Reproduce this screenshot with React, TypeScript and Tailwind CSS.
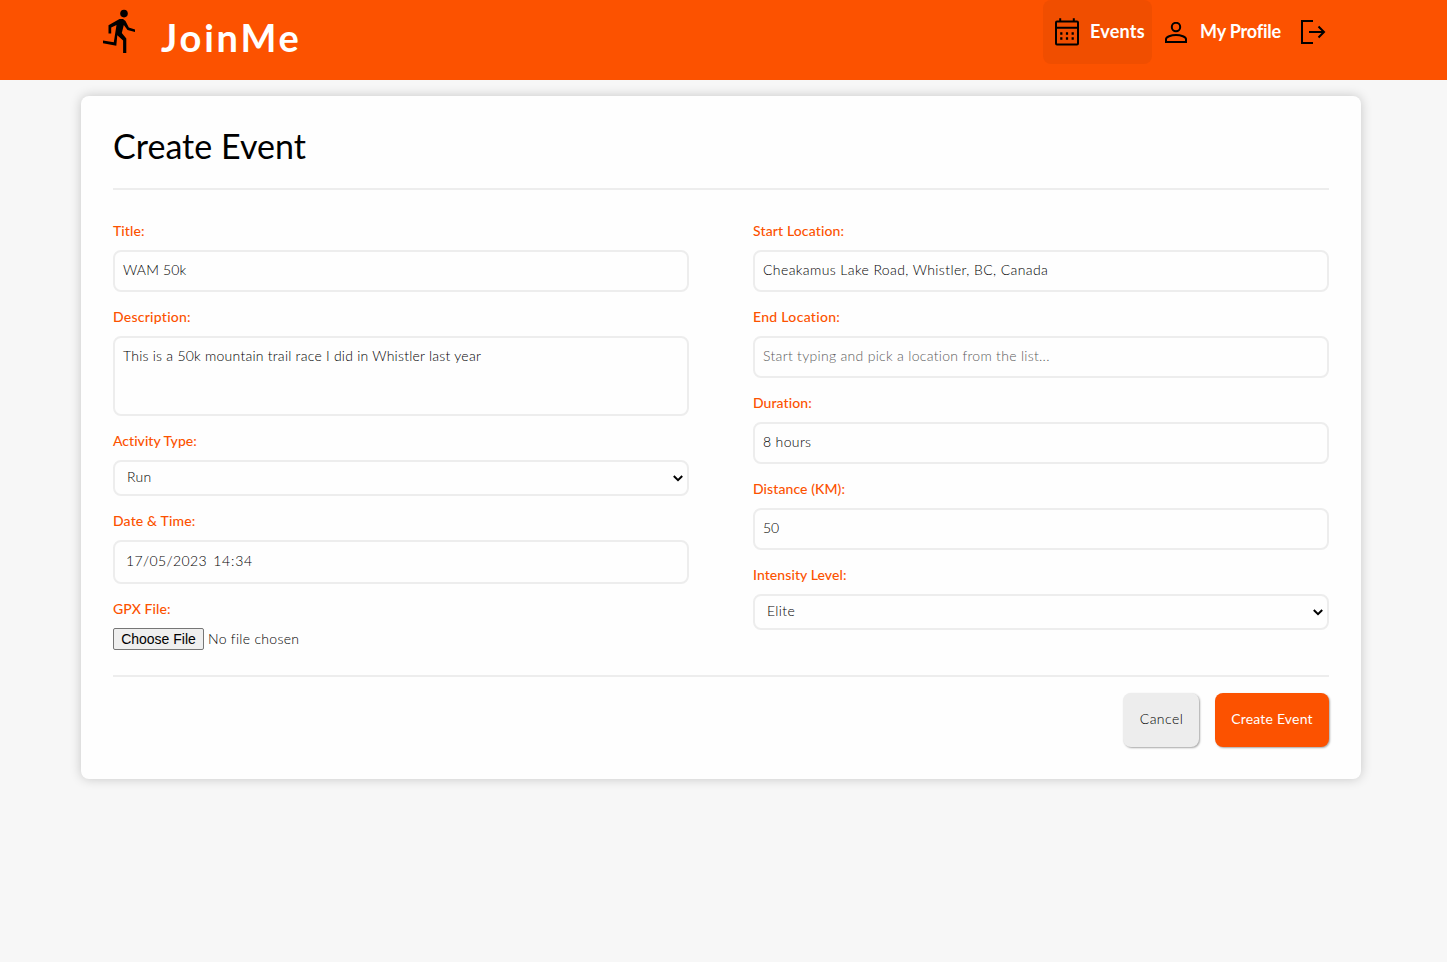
import React from "react";

type FieldProps = { label: string; labelClass?: string; children: React.ReactNode };

function Field({ label, labelClass = "tracking-[0.08px]", children }: FieldProps) {
  return (
    <div className="flex flex-col gap-[11px]">
      <div className="flex h-4 items-center">
        <span className={`text-[14px] font-medium leading-4 whitespace-nowrap text-[#fc5200] ${labelClass}`}>{label}</span>
      </div>
      {children}
    </div>
  );
}

type BoxProps = { value: string; className?: string; textClass?: string };

function Box({ value, className = "h-[42px]", textClass = "text-black" }: BoxProps) {
  return (
    <div className={`rounded-lg border-2 border-[#ededed] px-2 pt-2 text-[14px] font-light leading-5 whitespace-nowrap ${className}`}>
      <span className={textClass}>{value}</span>
    </div>
  );
}

function SelectBox({ value, textClass = "" }: { value: string; textClass?: string }) {
  return (
    <div className="flex h-9 items-center justify-between rounded-lg border-2 border-[#ededed] pl-3 pr-1 text-[14px] font-light leading-5 text-black">
      <span className={`-mt-0.5 ${textClass}`}>{value}</span>
      <svg className="mt-px h-[7px] w-[10px]" viewBox="0 0 10 7" fill="none" stroke="#000" strokeWidth="2">
        <path d="M0.800 1 5 5.200 9.200 1" />
      </svg>
    </div>
  );
}

function Header() {
  return (
    <header className="flex h-20 justify-between bg-[#fc5200] pl-[102px] pr-[121px]">
      <div className="flex">
        <svg className="mt-[9px] h-[45px] w-[34px]" viewBox="0 0 34 45">
          <circle cx="22" cy="4.6" r="3.8" />
          <path d="M17.500 10h3.500l2.500 2 3.300 6.600 6.200 1.800v2.500l-7.500-1.900-3.700-5-2 8 4.500 5.500V44h-3.200V31.500l-5.800-5.200L14.300 36.800 1 34.200v-2.800l10.800 1.900 2.700-17.300-5.300 2.600v5.900H6.500v-8.200z" />
        </svg>
        <span className="ml-[25px] mt-3 text-[38px] font-bold leading-[50px] tracking-[2.8px] text-white">JoinMe</span>
      </div>
      <nav className="flex h-16 text-[18px] font-bold leading-6 text-white">
        <a className="flex w-[109px] rounded-lg bg-[#f04e00] pl-3">
          <svg className="mt-[18px] h-7 w-6" viewBox="0 0 24 28" fill="none" stroke="#000" strokeWidth="2">
            <rect x="1" y="3.5" width="22" height="23" rx="1" />
            <path d="M1 9.800h22M5.200 0.300v3M18.800 0.300v3" />
            <path strokeWidth="2.4" d="M5.200 15.500h2.200M10.900 15.500h2.200M16.600 15.500h2.200M5.200 20.500h2.200M10.900 20.500h2.200M16.600 20.500h2.200" />
          </svg>
          <span className="ml-[11px] mt-[19px] tracking-[0.2px]">Events</span>
        </a>
        <a className="flex pl-[13px]">
          <svg className="mt-[22px] h-[21px] w-[22px]" viewBox="0 0 22 21" fill="none" stroke="#000" strokeWidth="2">
            <circle cx="11" cy="5" r="4.2" />
            <path d="M1 20v-3c0-2 5-4 10-4s10 2 10 4v3z" />
          </svg>
          <span className="ml-[13px] mt-[19px] whitespace-nowrap tracking-[-0.2px]">My Profile</span>
        </a>
        <a className="ml-5 flex">
          <svg className="mt-5 h-6 w-[25px]" viewBox="0 0 25 24" fill="none" stroke="#000" strokeWidth="2">
            <path d="M12 1H1v22h11M8 12h15M17.500 6.500 23 12l-5.500 5.500" />
          </svg>
        </a>
      </nav>
    </header>
  );
}

export default function App() {
  return (
    <div className="min-h-[962px] bg-[#f7f7f7] font-['Lato',sans-serif]">
      <Header />
      <main className="ml-[81px] mt-4 h-[683px] w-[1280px] rounded-lg bg-[#fefefe] px-8 shadow-[0_0_12px_rgba(0,0,0,0.2)]">
        <div className="h-[94px] border-b-2 border-[#ededed] pt-[30px]">
          <h1 className="text-[34px] leading-10 tracking-[0.05px] text-black">Create Event</h1>
        </div>
        <div className="grid h-[487px] grid-cols-2 gap-16 border-b-2 border-[#ededed] pt-[33px]">
          <div className="flex flex-col gap-[17px]">
            <Field label="Title:">
              <Box value="WAM 50k" textClass="tracking-[0.15px] text-black" />
            </Field>
            <Field label="Description:" labelClass="tracking-[0.25px]">
              <Box value="This is a 50k mountain trail race I did in Whistler last year" className="h-20" textClass="tracking-[0.24px] text-black" />
            </Field>
            <Field label="Activity Type:" labelClass="tracking-[0.02px]">
              <SelectBox value="Run" textClass="tracking-[0.3px]" />
            </Field>
            <Field label="Date & Time:" labelClass="tracking-[0.15px]">
              <div className="h-11 rounded-lg border-2 border-[#ededed] px-[11px] pt-[9px] text-[14px] font-light leading-5 text-black">
                <span className="tracking-[0.4px]">17/05/2023</span>
                <span className="ml-[6px] tracking-[0.8px]">14:34</span>
              </div>
            </Field>
            <Field label="GPX File:">
              <div className="flex h-[22px] items-center gap-1 text-[14px] leading-5 whitespace-nowrap text-black">
                <button className="h-[22px] w-[91px] rounded-[2px] border border-[#767676] bg-[#efefef] text-[14px] leading-5 text-black font-['Liberation_Sans']">
                  Choose File
                </button>
                <span className="font-light tracking-[0.3px]">No file chosen</span>
              </div>
            </Field>
          </div>
          <div className="flex flex-col gap-[17px]">
            <Field label="Start Location:" labelClass="tracking-[0.13px]">
              <Box value="Cheakamus Lake Road, Whistler, BC, Canada" textClass="tracking-[0.39px] text-black" />
            </Field>
            <Field label="End Location:" labelClass="tracking-[0.3px]">
              <Box value="Start typing and pick a location from the list..." textClass="tracking-[0.3px] text-[#5c5c5c]" />
            </Field>
            <Field label="Duration:">
              <Box value="8 hours" textClass="tracking-[0.35px] text-black" />
            </Field>
            <Field label="Distance (KM):">
              <Box value="50" />
            </Field>
            <Field label="Intensity Level:">
              <SelectBox value="Elite" textClass="tracking-[0.35px]" />
            </Field>
          </div>
        </div>
        <div className="flex justify-end gap-4 pt-4 text-[14px] leading-5">
          <button className="h-[54px] w-[76px] rounded-lg bg-[#ededed] pb-0.5 pl-px font-light tracking-[0.45px] text-black shadow-[1px_1px_2px_rgba(0,0,0,0.35)]">Cancel</button>
          <button className="h-[54px] w-[114px] rounded-lg bg-[#fc5200] pb-0.5 whitespace-nowrap tracking-[0.2px] text-white shadow-[1px_1px_2px_rgba(0,0,0,0.35)]">Create Event</button>
        </div>
      </main>
    </div>
  );
}
